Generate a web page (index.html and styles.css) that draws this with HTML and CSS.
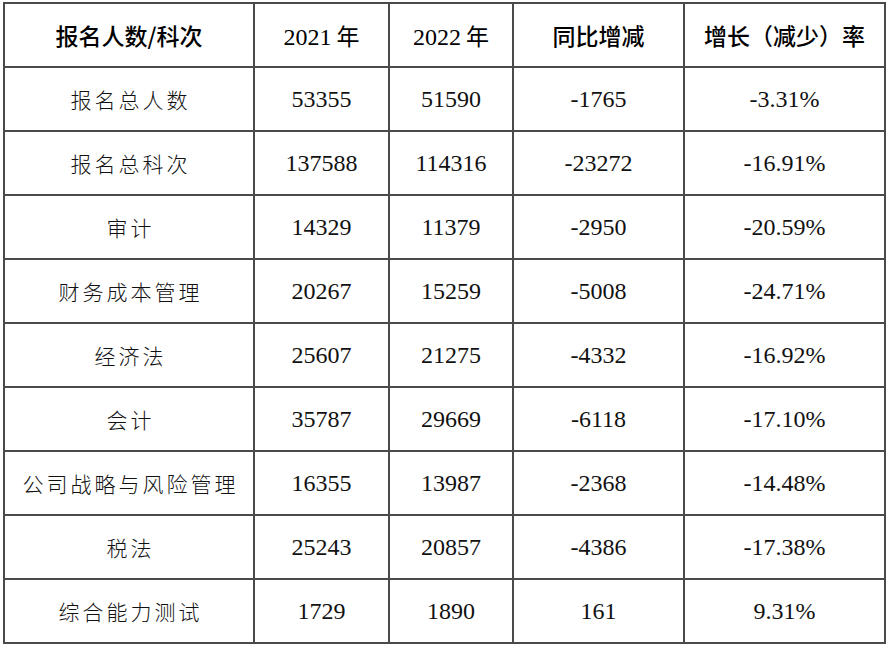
FILE: index.html
```html
<!DOCTYPE html>
<html lang="zh">
<head>
<meta charset="utf-8">
<link rel="stylesheet" href="styles.css">
</head>
<body>
<div class="wrap">
<table class="stats">
<colgroup>
<col class="c1"><col class="c2"><col class="c3"><col class="c4"><col class="c5">
</colgroup>
<thead>
<tr>
<th>报名人数/科次</th>
<th class="year"><span class="num">2021</span> 年</th>
<th class="year"><span class="num">2022</span> 年</th>
<th>同比增减</th>
<th>增长（减少）率</th>
</tr>
</thead>
<tbody>
<tr><td class="name">报名总人数</td><td>53355</td><td>51590</td><td>-1765</td><td>-3.31%</td></tr>
<tr><td class="name">报名总科次</td><td>137588</td><td>114316</td><td>-23272</td><td>-16.91%</td></tr>
<tr><td class="name">审计</td><td>14329</td><td>11379</td><td>-2950</td><td>-20.59%</td></tr>
<tr><td class="name">财务成本管理</td><td>20267</td><td>15259</td><td>-5008</td><td>-24.71%</td></tr>
<tr><td class="name">经济法</td><td>25607</td><td>21275</td><td>-4332</td><td>-16.92%</td></tr>
<tr><td class="name">会计</td><td>35787</td><td>29669</td><td>-6118</td><td>-17.10%</td></tr>
<tr><td class="name">公司战略与风险管理</td><td>16355</td><td>13987</td><td>-2368</td><td>-14.48%</td></tr>
<tr><td class="name">税法</td><td>25243</td><td>20857</td><td>-4386</td><td>-17.38%</td></tr>
<tr><td class="name">综合能力测试</td><td>1729</td><td>1890</td><td>161</td><td>9.31%</td></tr>
</tbody>
</table>
</div>
</body>
</html>
```
FILE: styles.css
```css
html, body {
  margin: 0;
  padding: 0;
  background: #ffffff;
}
.wrap {
  padding: 2px 0 0 3px;
}
.stats {
  border-collapse: collapse;
  table-layout: fixed;
  width: 881px;
  color: #111;
}
.c1 { width: 250px; }
.c2 { width: 135px; }
.c3 { width: 124px; }
.c4 { width: 171px; }
.c5 { width: 201px; }
.stats th, .stats td {
  border: 2px solid #4a4a4a;
  height: 62px;
  padding: 0;
  text-align: center;
  vertical-align: middle;
}
.stats th {
  font-family: "Noto Sans CJK SC", sans-serif;
  font-weight: 500;
  font-size: 23px;
  color: #000;
}
.stats th.year {
  font-weight: 400;
}
.stats th .num {
  font-family: "Liberation Serif", serif;
  font-weight: normal;
  font-size: 24px;
}
.stats td {
  font-family: "Liberation Serif", "Noto Sans CJK SC", serif;
  font-size: 24px;
}
.stats td.name {
  font-family: "Noto Sans CJK SC", sans-serif;
  font-size: 21px;
  font-weight: 300;
  letter-spacing: 3px;
  padding-left: 3px;
}
```
